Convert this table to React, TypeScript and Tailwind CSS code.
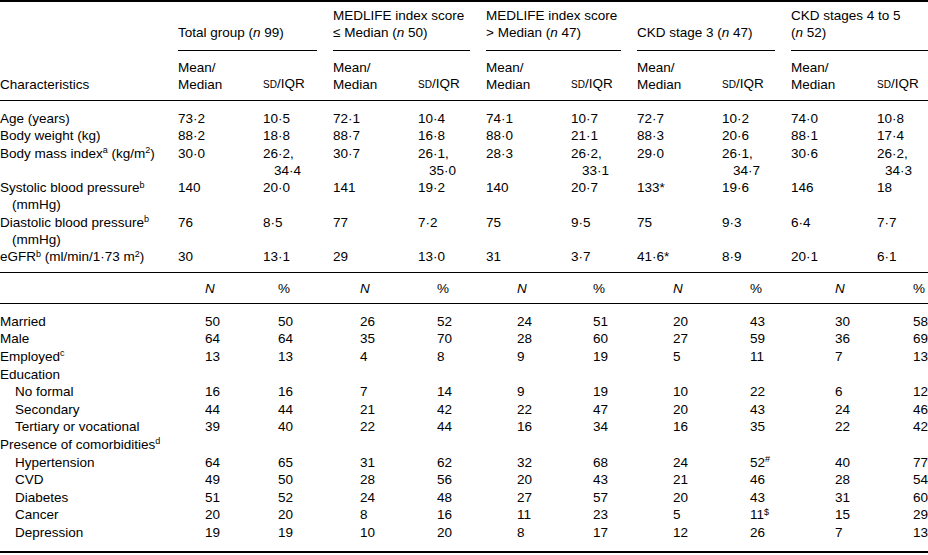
import type { ReactNode } from "react"

const topCols = "grid grid-cols-[178px_85px_70px_85px_68px_85px_66px_85px_69px_86px_1fr]"
const lowCols = "grid grid-cols-[205px_73px_82px_77px_80px_76px_80px_77px_85px_78px_1fr]"

function Sup({ children }: { children: ReactNode }) {
  return <sup className="text-[9px]">{children}</sup>
}

function N({ v }: { v: string }) {
  return (
    <>
      (<i>n</i> {v})
    </>
  )
}

function Lines({ lines, indent }: { lines: ReactNode[]; indent: string }) {
  return (
    <div>
      {lines.map((l, i) => (
        <div key={i} className={i > 0 ? indent : ""}>
          {l}
        </div>
      ))}
    </div>
  )
}

const groups: ReactNode[][] = [
  [<>Total group <N v="99" /></>],
  ["MEDLIFE index score", <>≤ Median <N v="50" /></>],
  ["MEDLIFE index score", <>&gt; Median <N v="47" /></>],
  [<>CKD stage 3 <N v="47" /></>],
  ["CKD stages 4 to 5", <N v="52" />],
]

// IQR cells that wrap are given as two lines
const topRows: { label: ReactNode[]; vals: (string | string[])[] }[] = [
  { label: ["Age (years)"], vals: ["73·2", "10·5", "72·1", "10·4", "74·1", "10·7", "72·7", "10·2", "74·0", "10·8"] },
  { label: ["Body weight (kg)"], vals: ["88·2", "18·8", "88·7", "16·8", "88·0", "21·1", "88·3", "20·6", "88·1", "17·4"] },
  {
    label: [<>Body mass index<Sup>a</Sup> (kg/m<Sup>2</Sup>)</>],
    vals: ["30·0", ["26·2,", "34·4"], "30·7", ["26·1,", "35·0"], "28·3", ["26·2,", "33·1"], "29·0", ["26·1,", "34·7"], "30·6", ["26·2,", "34·3"]],
  },
  {
    label: [<>Systolic blood pressure<Sup>b</Sup></>, "(mmHg)"],
    vals: ["140", "20·0", "141", "19·2", "140", "20·7", "133*", "19·6", "146", "18"],
  },
  {
    label: [<>Diastolic blood pressure<Sup>b</Sup></>, "(mmHg)"],
    vals: ["76", "8·5", "77", "7·2", "75", "9·5", "75", "9·3", "6·4", "7·7"],
  },
  {
    label: [<>eGFR<Sup>b</Sup> (ml/min/1·73 m<Sup>2</Sup>)</>],
    vals: ["30", "13·1", "29", "13·0", "31", "3·7", "41·6*", "8·9", "20·1", "6·1"],
  },
]

const lowRows: { label: ReactNode; sub?: boolean; vals: ReactNode[] }[] = [
  { label: "Married", vals: ["50", "50", "26", "52", "24", "51", "20", "43", "30", "58"] },
  { label: "Male", vals: ["64", "64", "35", "70", "28", "60", "27", "59", "36", "69"] },
  { label: <>Employed<Sup>c</Sup></>, vals: ["13", "13", "4", "8", "9", "19", "5", "11", "7", "13"] },
  { label: "Education", vals: [] },
  { label: "No formal", sub: true, vals: ["16", "16", "7", "14", "9", "19", "10", "22", "6", "12"] },
  { label: "Secondary", sub: true, vals: ["44", "44", "21", "42", "22", "47", "20", "43", "24", "46"] },
  { label: "Tertiary or vocational", sub: true, vals: ["39", "40", "22", "44", "16", "34", "16", "35", "22", "42"] },
  { label: <>Presence of comorbidities<Sup>d</Sup></>, vals: [] },
  { label: "Hypertension", sub: true, vals: ["64", "65", "31", "62", "32", "68", "24", <>52<Sup>#</Sup></>, "40", "77"] },
  { label: "CVD", sub: true, vals: ["49", "50", "28", "56", "20", "43", "21", "46", "28", "54"] },
  { label: "Diabetes", sub: true, vals: ["51", "52", "24", "48", "27", "57", "20", "43", "31", "60"] },
  { label: "Cancer", sub: true, vals: ["20", "20", "8", "16", "11", "23", "5", <>11<Sup>$</Sup></>, "15", "29"] },
  { label: "Depression", sub: true, vals: ["19", "19", "10", "20", "8", "17", "12", "26", "7", "13"] },
]

export default function App() {
  return (
    <div className="w-[928px] h-[555px] bg-white text-black text-[13.5px] font-['Liberation_Sans',Arial,sans-serif] overflow-hidden">
      <div className="border-t-2 border-black" />

      {/* group headings */}
      <div className={`${topCols} leading-[17px]`}>
        <div />
        {groups.map((g, i) => (
          <div
            key={i}
            className={`col-span-2 flex flex-col justify-end border-b border-black pt-[5px] pb-[9px] ${i < 4 ? "mr-[16px]" : ""}`}
          >
            {g.map((l, j) => (
              <div key={j}>{l}</div>
            ))}
          </div>
        ))}
      </div>

      {/* sub headings */}
      <div className={`${topCols} leading-[17px] pt-[8px] pb-[7px]`}>
        <div className="self-end">Characteristics</div>
        {groups.map((_, i) => (
          <div key={i} className="contents">
            <div>
              Mean/
              <br />
              Median
            </div>
            <div className="self-end">
              <span className="text-[10px]">SD</span>/IQR
            </div>
          </div>
        ))}
      </div>
      <div className="h-px bg-black" />

      {/* continuous variables */}
      <div className={`${topCols} leading-[17.25px] pt-[9px] pb-[7px]`}>
        {topRows.map((r, i) => (
          <div key={i} className="contents">
            <Lines lines={r.label} indent="pl-[12px]" />
            {r.vals.map((v, j) =>
              Array.isArray(v) ? (
                <Lines key={j} lines={v} indent={j === 9 ? "pl-[8px]" : "pl-[11px]"} />
              ) : (
                <div key={j}>{v}</div>
              )
            )}
          </div>
        ))}
      </div>
      <div className="h-px bg-black" />

      {/* N / % heading */}
      <div className={`${lowCols} leading-[17.5px] pt-[7px] pb-[5px]`}>
        <div />
        {groups.map((_, i) => (
          <div key={i} className="contents">
            <div className="italic">N</div>
            <div>%</div>
          </div>
        ))}
      </div>
      <div className="h-px bg-black" />

      {/* categorical variables */}
      <div className={`${lowCols} leading-[17.6px] pt-[9px] pb-[10px]`}>
        {lowRows.map((r, i) => (
          <div key={i} className="contents">
            <div className={r.sub ? "pl-[15px]" : "whitespace-nowrap"}>{r.label}</div>
            {r.vals.length === 0 ? (
              <div className="col-span-10" />
            ) : (
              r.vals.map((v, j) => <div key={j}>{v}</div>)
            )}
          </div>
        ))}
      </div>
      <div className="border-t-2 border-black" />
    </div>
  )
}
